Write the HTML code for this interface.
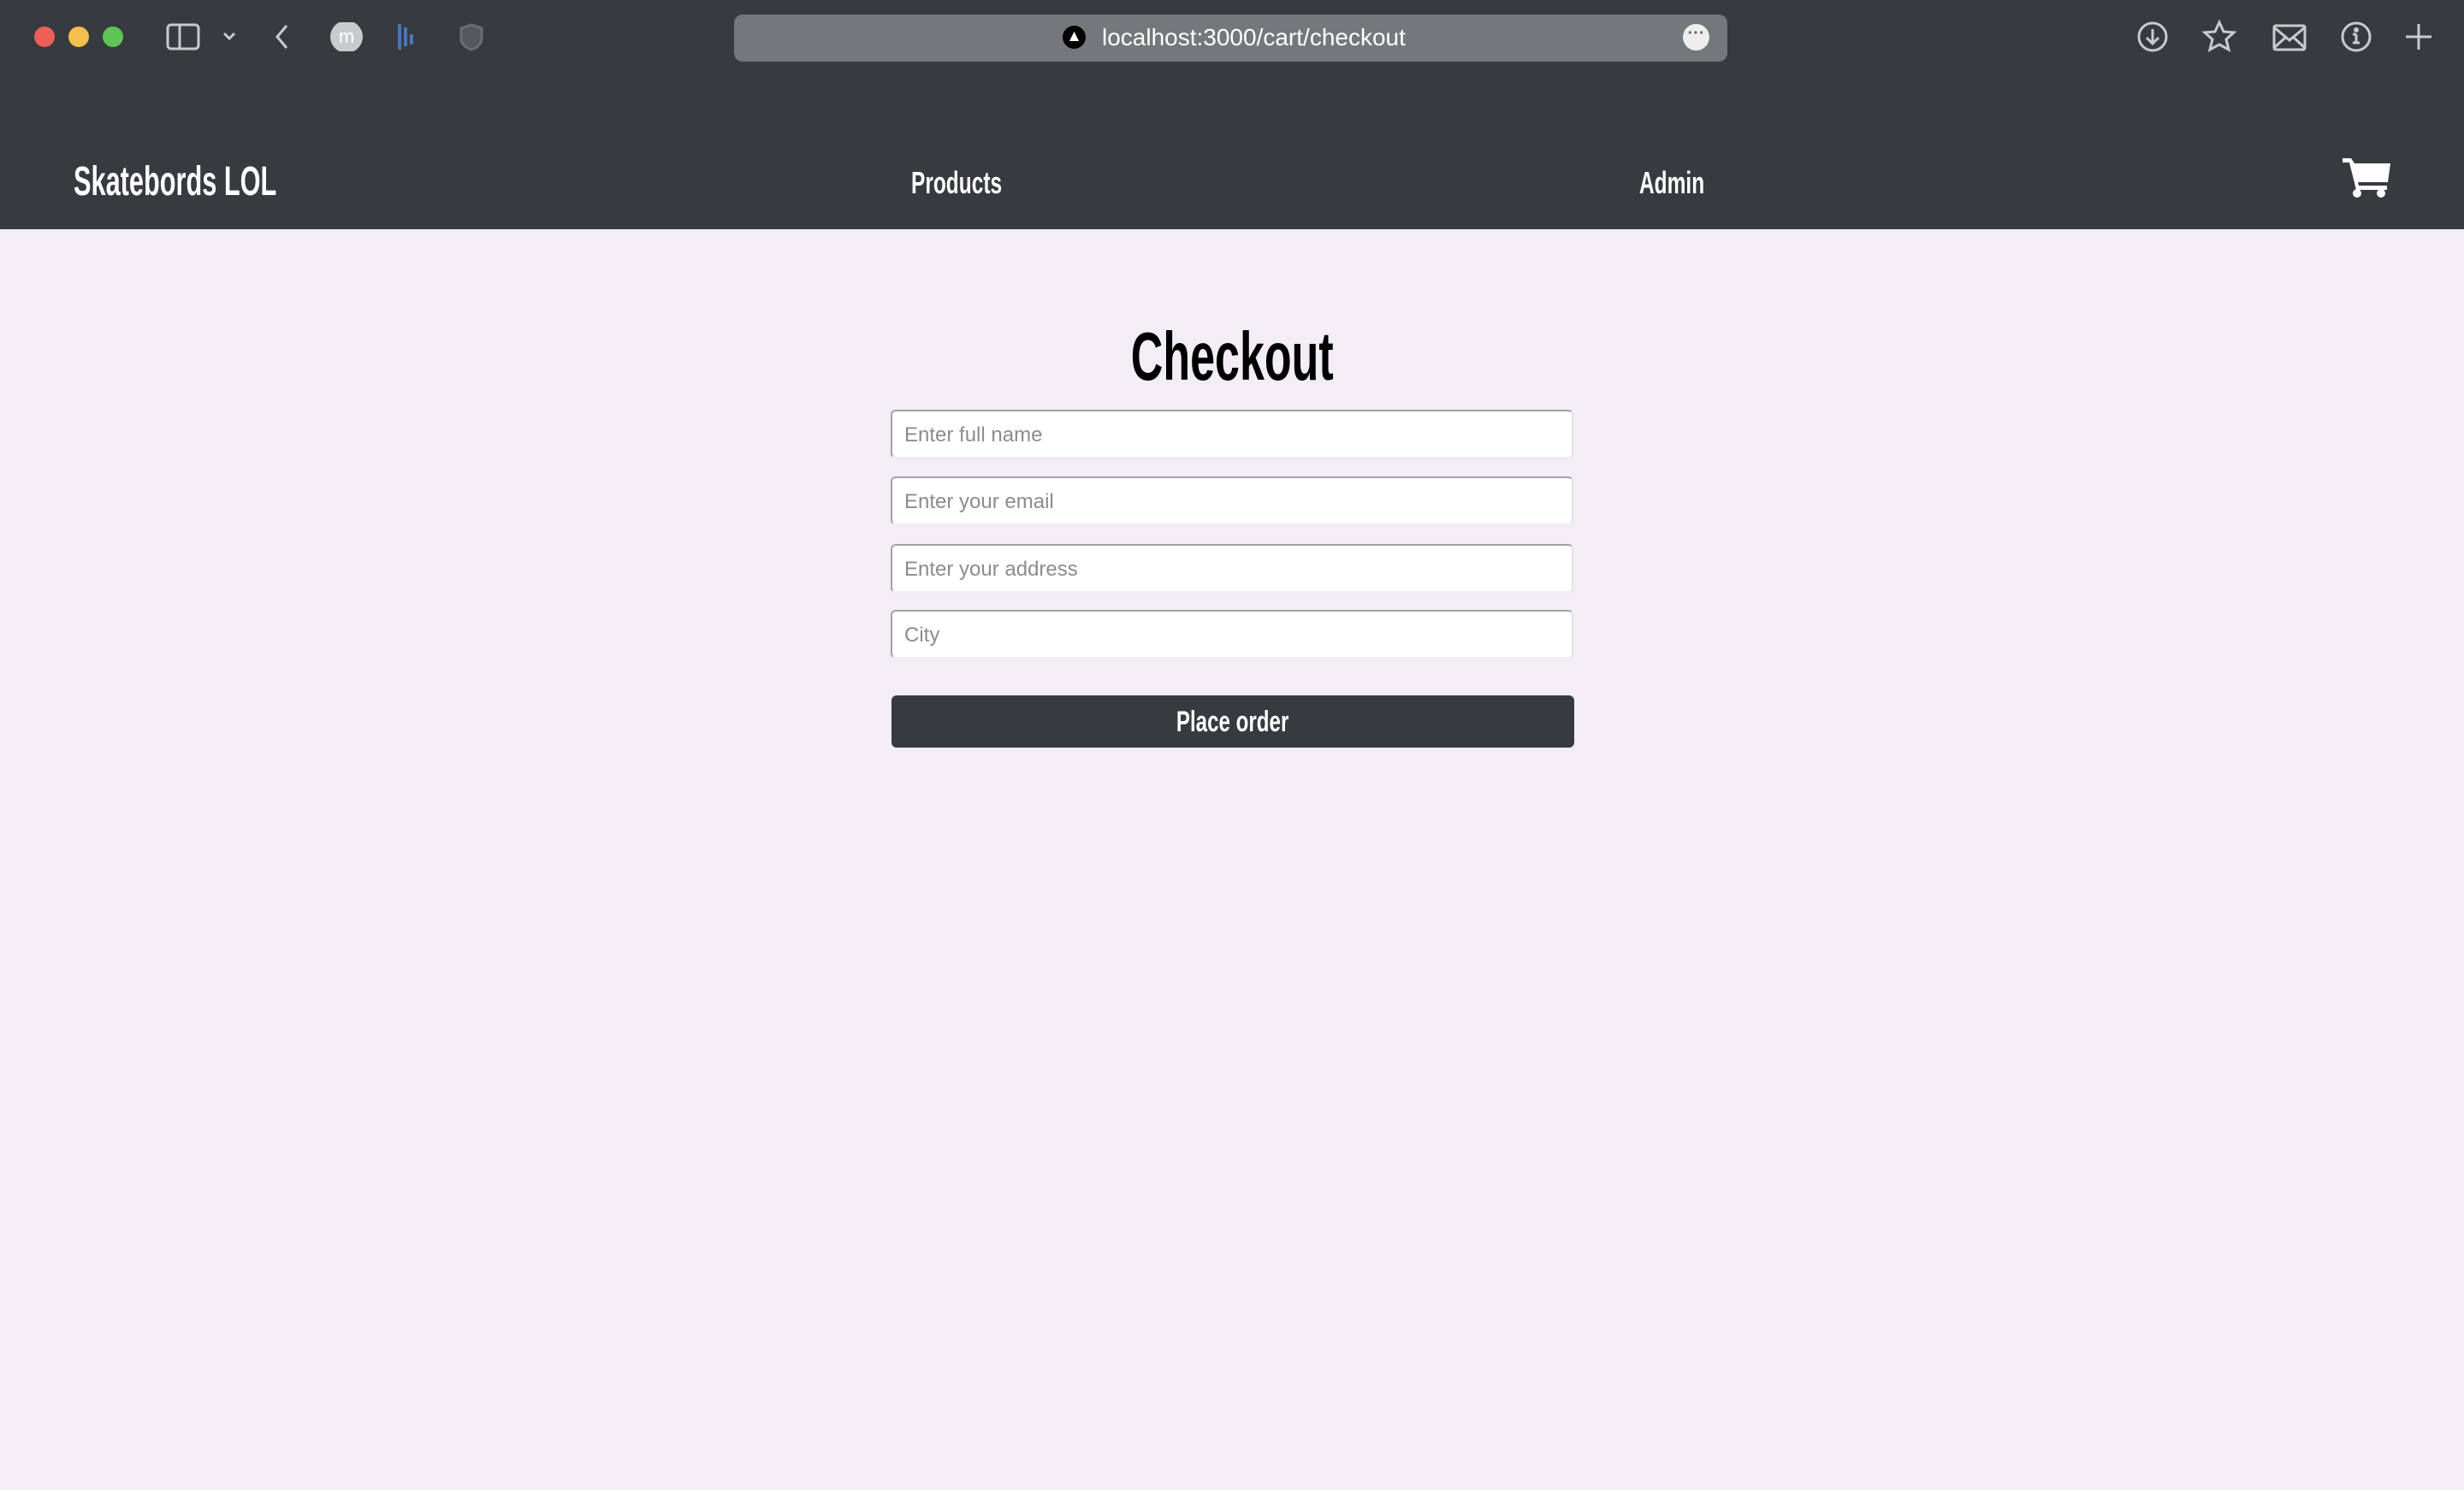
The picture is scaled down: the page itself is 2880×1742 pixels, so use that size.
<!DOCTYPE html>
<html><head><meta charset="utf-8"><style>
*{margin:0;padding:0;box-sizing:border-box}
body{width:2880px;height:1742px;background:#f3eef5;font-family:"Liberation Sans",sans-serif;position:relative;overflow:hidden}
.top{position:absolute;left:0;top:0;width:2880px;height:268px;background:#373a3f}
.abs{position:absolute}
.narrow{font-family:"Liberation Sans Narrow","Liberation Sans",sans-serif;font-weight:bold;display:inline-block;transform-origin:left center}
.inp{position:absolute;left:1041px;width:798px;height:57px;background:#fff;border:2px solid #a4a2a7;border-radius:6px;border-bottom-color:#eee;border-right-color:#e4e2e6;font-size:24px;color:#8c8c8c;padding-left:14px;line-height:55px}
</style></head><body>
<div class="top"></div>
<div class="abs" style="left:40px;top:31px;width:24px;height:24px;border-radius:50%;background:#ec5f57"></div>
<div class="abs" style="left:80px;top:31px;width:24px;height:24px;border-radius:50%;background:#f4bf4f"></div>
<div class="abs" style="left:120px;top:31px;width:24px;height:24px;border-radius:50%;background:#5fc454"></div>
<svg class="abs" style="left:190px;top:26px" width="400" height="34" viewBox="0 0 400 34" fill="none" stroke="#c9cacc" stroke-width="3">
<rect x="6" y="3" width="36" height="28" rx="4"/><line x1="20" y1="3" x2="20" y2="31"/>
<path d="M72 13l6 6 6-6"/>
<path d="M145 4l-11 13 11 13"/>
<circle cx="215" cy="17" r="19" fill="#c9cacc" stroke="none"/>
<text x="215" y="24" font-size="22" text-anchor="middle" fill="#fff" stroke="none" font-family="Liberation Sans">m</text>
<path d="M277 2v30M284 6v22M291 14v12" stroke="#4a77b4" stroke-width="4"/>
<path d="M361 3l-12 4v12c0 6 5 11 12 13 7-2 12-7 12-13V7z" stroke="#6a6d71" fill="#55585c"/>
</svg>
<div class="abs" style="left:858px;top:17px;width:1161px;height:55px;border-radius:10px;background:#75787b"></div>
<div class="abs" style="left:1242px;top:30px;width:27px;height:27px;border-radius:50%;background:#000"></div>
<svg class="abs" style="left:1248px;top:35px" width="15" height="15"><path d="M7.5 2L13 13H2z" fill="#fff"/></svg>
<div class="abs" style="left:1288px;top:28px;font-size:28px;color:#fff">localhost:3000/cart/checkout</div>
<div class="abs" style="left:1967px;top:28px;width:31px;height:31px;border-radius:50%;background:#eee;color:#666;font-size:20px;text-align:center;line-height:22px;font-weight:bold">···</div>
<svg class="abs" style="left:2490px;top:22px" width="370" height="44" viewBox="0 0 370 44" fill="none" stroke="#c9cacc" stroke-width="3">
<circle cx="26" cy="21" r="16"/><path d="M26 12v17M19 22l7 7 7-7"/>
<path d="M104 4l5 11 12 1-9 8 3 12-11-6-11 6 3-12-9-8 12-1z"/>
<rect x="168" y="8" width="36" height="28" rx="2"/><path d="M168 10l18 15 18-15M168 34l13-12M204 34l-13-12"/>
<circle cx="264" cy="21" r="16"/><path d="M264 18v10M260 28h8M260 18h4" /><circle cx="264" cy="13" r="1.5" fill="#c9cacc"/>
<path d="M337 6v30M322 21h30"/>
</svg>
<div class="abs" style="left:86px;top:185px;font-size:48px;color:#fff"><span class="narrow" style="transform:scaleX(0.64)">Skatebords LOL</span></div>
<div class="abs" style="left:1065px;top:193px;font-size:36px;color:#fff"><span class="narrow" style="transform:scaleX(0.68)">Products</span></div>
<div class="abs" style="left:1916px;top:193px;font-size:36px;color:#fff"><span class="narrow" style="transform:scaleX(0.68)">Admin</span></div>
<svg class="abs" style="left:2736px;top:180px" width="60" height="53" viewBox="0 0 60 53">
<path d="M2 5h10l4 6h42l-3 22H20l1 4h33v5H18L10 10H2z" fill="#fff"/>
<circle cx="19" cy="46" r="5" fill="#fff"/><circle cx="47" cy="46" r="5" fill="#fff"/>
</svg>
<div class="abs" style="left:0;width:2880px;top:371px;text-align:center;font-size:80px;color:#000"><span class="narrow" style="transform:scaleX(0.65);transform-origin:center">Checkout</span></div>
<div class="inp" style="top:479px">Enter full name</div>
<div class="inp" style="top:557px">Enter your email</div>
<div class="inp" style="top:636px">Enter your address</div>
<div class="inp" style="top:713px">City</div>
<div class="abs" style="left:1042px;top:813px;width:798px;height:61px;background:#373a3f;border-radius:6px;text-align:center;line-height:63px;color:#fff;font-size:34px"><span class="narrow" style="transform:scaleX(0.71);transform-origin:center">Place order</span></div>
</body></html>
